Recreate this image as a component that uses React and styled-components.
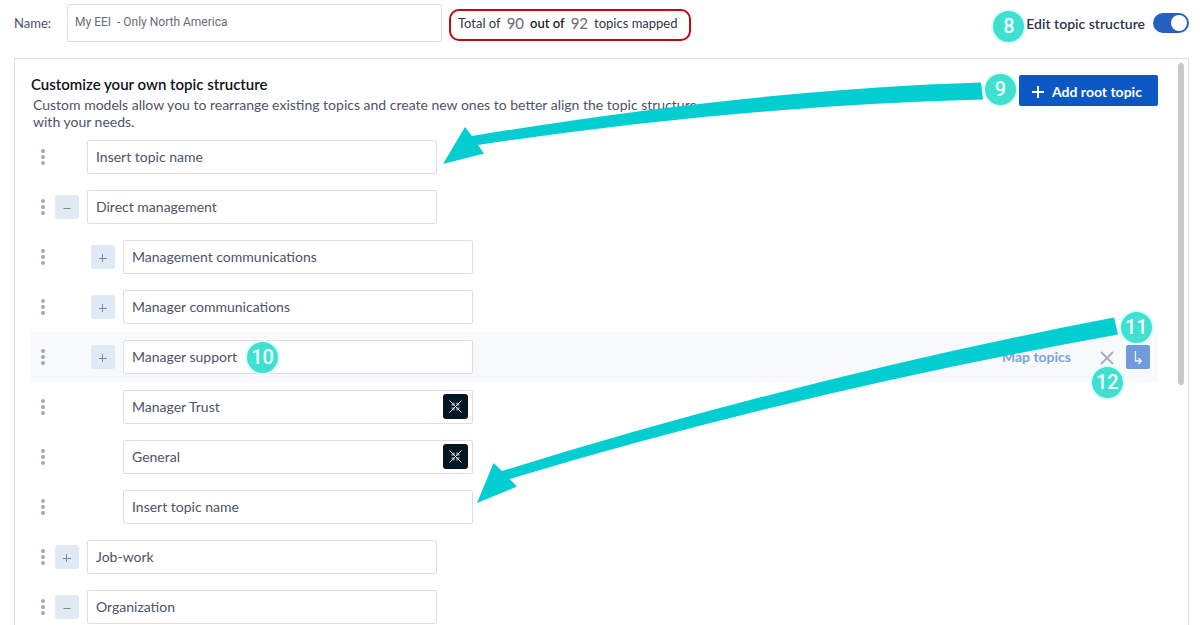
import React, {useState} from 'react';
import styled, {createGlobalStyle} from 'styled-components';

const GlobalStyle = createGlobalStyle`
    * {
        box-sizing: border-box;
    }
    body {
        margin: 0;
        background: #fff;
        color: #4c5467;
        font-family: Lato, 'Liberation Sans', sans-serif;
        font-size: 14px;
    }
    input, button {
        font-family: inherit;
        font-size: inherit;
    }
`

const Page = styled.div`
    position: relative;
    height: 100vh;
    padding: 4px 11px 0 14px;
    display: flex;
    flex-direction: column;
    overflow: hidden;
`

const TopBar = styled.header`
    display: flex;
    align-items: center;
    height: 38px;
    margin-bottom: 16px;
`

const NameLabel = styled.label`
    width: 53px;
    font-size: 13px;
`

const NameInput = styled.input`
    width: 375px;
    height: 38px;
    padding: 0 7px 3px;
    border: 1px solid #d9ddec;
    border-radius: 2px;
    color: #666b78;
    font-family: Roboto, sans-serif;
    font-size: 12px;
    white-space: pre;
`

const Total = styled.div`
    display: flex;
    align-items: center;
    height: 32px;
    width: 242px;
    margin: 4px 0 0 7px;
    padding: 0 7px 4px;
    border: 2px solid #bf0a0f;
    border-radius: 10px;
    color: #2f3646;
    font-size: 13px;
    white-space: pre;
`

const Count = styled.span`
    margin: 0 6px;
    color: #666b78;
    font-size: 15px;
`

const OutOf = styled.span`
    color: #1c2230;
    font-weight: 600;
`

const EditLabel = styled.label`
    position: relative;
    display: flex;
    align-items: center;
    gap: 8px;
    margin-left: auto;
    color: #2b344a;
    font-weight: 600;
`

const Switch = styled.input`
    appearance: none;
    width: 36px;
    height: 20px;
    margin: 0;
    border-radius: 10px;
    background: ${props => props.checked ? '#255fbf' : '#b9bfcc'};
    cursor: pointer;
    &::before {
        content: '';
        display: block;
        width: 16px;
        height: 16px;
        margin: 2px;
        margin-left: ${props => props.checked ? '18px' : '2px'};
        border-radius: 50%;
        background: #fff;
    }
`

const Badge = styled.span`
    position: absolute;
    z-index: 3;
    top: ${props => props.$top}px;
    left: ${props => props.$left}px;
    width: 35px;
    height: 35px;
    border: 2px solid #dcfdfb;
    border-radius: 50%;
    background: #40e0d0;
    color: #f2fffd;
    font-family: Roboto, sans-serif;
    font-size: 20px;
    font-weight: 500;
    line-height: 31px;
    text-align: center;
    pointer-events: none;
`

const Panel = styled.main`
    flex: 1;
    min-height: 0;
    display: flex;
    justify-content: space-between;
    border: 1px solid #d9ddec;
    border-bottom: none;
    overflow: hidden;
`

const Content = styled.div`
    flex: 1;
    padding: 16px 20px 0 16px;
`

const ScrollThumb = styled.div`
    width: 6px;
    height: 322px;
    margin: 4px 4px 0 0;
    border-radius: 3px;
    background: #c9c9c9;
`

const Intro = styled.div`
    display: flex;
    justify-content: space-between;
    align-items: flex-start;
    height: 57px;
`

const Title = styled.h1`
    margin: 0;
    color: #10131c;
    font-size: 15px;
    font-weight: 600;
    line-height: 19px;
`

const Description = styled.p`
    max-width: 670px;
    margin: 2px 0 0 2px;
    line-height: 17px;
`

const AddWrap = styled.div`
    position: relative;
`

const AddButton = styled.button`
    display: flex;
    align-items: center;
    gap: 8px;
    width: 139px;
    height: 31px;
    padding: 2px 0 0 13px;
    border: none;
    border-radius: 2px;
    background: #0b57c4;
    color: #fff;
    font-weight: 700;
    white-space: nowrap;
`

const TopicList = styled.ul`
    margin: 0;
    padding: 0;
    list-style: none;
`

const TopicRow = styled.li`
    display: flex;
    align-items: center;
    height: 50px;
    padding-right: 8px;
    background: ${props => props.$active ? '#f8f9fb' : 'transparent'};
`

const Handle = styled.button`
    display: flex;
    width: 24px;
    margin-right: ${props => props.$level * 36}px;
    padding: 0 0 0 10px;
    border: none;
    background: none;
`

const ToggleSlot = styled.div`
    width: 24px;
    height: 24px;
    margin-right: 8px;
`

const Toggle = styled.button`
    display: flex;
    align-items: center;
    justify-content: center;
    width: 24px;
    height: 24px;
    padding: 2px 0 0;
    border: none;
    border-radius: 3px;
    background: #e0eaf5;
`

const Field = styled.div`
    position: relative;
    width: 350px;
`

const TopicInput = styled.input`
    display: block;
    width: 100%;
    height: 34px;
    padding: 0 8px 2px;
    border: 1px solid #d9ddec;
    border-radius: 2px;
    background: #fff;
    color: #4c5467;
    &::placeholder {
        color: #4c5467;
        opacity: 1;
    }
`

const MergeButton = styled.button`
    position: absolute;
    top: 4px;
    right: 5px;
    display: flex;
    align-items: center;
    justify-content: center;
    width: 25px;
    height: 25px;
    padding: 0;
    border: none;
    border-radius: 3px;
    background: #051624;
`

const Actions = styled.div`
    position: relative;
    display: flex;
    align-items: center;
    margin-left: auto;
`

const MapLink = styled.a`
    margin-right: 29px;
    padding-bottom: 2px;
    color: #7aa2dd;
    font-weight: 700;
    text-decoration: none;
`

const RemoveButton = styled.button`
    display: flex;
    margin-right: 12px;
    padding: 2px 0 0;
    border: none;
    background: none;
`

const ChildButton = styled.button`
    display: flex;
    align-items: center;
    justify-content: center;
    width: 24px;
    height: 24px;
    padding: 2px 0 0;
    border: none;
    border-radius: 2px;
    background: #6f9bdb;
`

const Arrow = styled.svg`
    position: absolute;
    z-index: 2;
    top: ${props => props.$top}px;
    left: ${props => props.$left}px;
    width: calc(100% - ${props => props.$inset}px);
    height: ${props => props.$height}px;
    fill: #02ced1;
    pointer-events: none;
`

const topics = [
    {id: 1, name: '', level: 0},
    {id: 2, name: 'Direct management', level: 0, toggle: 'minus'},
    {id: 3, name: 'Management communications', level: 1, toggle: 'plus'},
    {id: 4, name: 'Manager communications', level: 1, toggle: 'plus'},
    {id: 5, name: 'Manager support', level: 1, toggle: 'plus', active: true},
    {id: 6, name: 'Manager Trust', level: 1, merge: true},
    {id: 7, name: 'General', level: 1, merge: true},
    {id: 8, name: '', level: 1},
    {id: 9, name: 'Job-work', level: 0, toggle: 'plus'},
    {id: 10, name: 'Organization', level: 0, toggle: 'minus'},
]

function DotsIcon () {
    return (
        <svg width="4" height="16" viewBox="0 0 4 16" fill="#a5a5c0">
            <circle cx="2" cy="2" r="2" />
            <circle cx="2" cy="8" r="2" />
            <circle cx="2" cy="14" r="2" />
        </svg>
    )
}

function ToggleIcon ({type}) {
    return (
        <svg width="8" height="8" viewBox="0 0 8 8" stroke="#7d88a8" fill="none">
            <path d={type === 'plus' ? 'M0 4.5H8M3.5 0V8' : 'M0.5 4.5H7.5'} />
        </svg>
    )
}

function MergeIcon () {
    return (
        <svg width="13" height="13" viewBox="0 0 13 13" stroke="#dfe3f2" fill="none">
            <path d="M0.5 0.5L12.5 12.5M12.5 0.5L0.5 12.5" />
            <path d="M2.5 4.9H4.9V2.5M10.5 4.9H8.1V2.5M2.5 8.1H4.9V10.5M10.5 8.1H8.1V10.5" strokeWidth="1.2" strokeOpacity="0.8" />
        </svg>
    )
}

function Topic ({topic}) {
    return (
        <TopicRow $active={topic.active}>
            <Handle $level={topic.level} aria-label="Move topic"><DotsIcon /></Handle>
            <ToggleSlot>
                {topic.toggle && <Toggle aria-label="Toggle subtopics"><ToggleIcon type={topic.toggle} /></Toggle>}
            </ToggleSlot>
            <Field>
                <TopicInput
                aria-label="Topic name"
                placeholder="Insert topic name"
                defaultValue={topic.name}
                />
                {topic.merge && <MergeButton aria-label="Merge topic"><MergeIcon /></MergeButton>}
                {topic.active && <Badge $top={0} $left={122}>10</Badge>}
            </Field>
            {topic.active &&
            <Actions>
                <MapLink href="#map">Map topics</MapLink>
                <RemoveButton aria-label="Remove topic">
                    <svg width="14" height="14" viewBox="0 0 14 14" stroke="#aaabc0" strokeWidth="1.8">
                        <path d="M1 1L13 13M13 1L1 13" />
                    </svg>
                </RemoveButton>
                <ChildButton aria-label="Add subtopic">
                    <svg width="8" height="14" viewBox="0 0 8 14" stroke="#f1f5fc" strokeWidth="1.3" fill="none">
                        <path d="M1.5 0V10H7M4.5 7L7.3 10L4.5 13" />
                    </svg>
                </ChildButton>
                <Badge $top={-35} $left={117}>11</Badge>
                <Badge $top={20} $left={88}>12</Badge>
            </Actions>}
        </TopicRow>
    )
}

export default function App() {

    const [editing, setEditing] = useState(true)

    return (
        <>
        <GlobalStyle />
        <Page>
            <TopBar>
                <NameLabel htmlFor="model-name">Name:</NameLabel>
                <NameInput id="model-name" defaultValue="My EEI  - Only North America" />
                <Total>
                    Total of<Count>90</Count><OutOf>out of</OutOf><Count>92</Count>topics mapped
                </Total>
                <EditLabel>
                    <Badge $top={-4} $left={-35}>8</Badge>
                    Edit topic structure
                    <Switch
                    type="checkbox"
                    checked={editing}
                    onChange={event => setEditing(event.target.checked)}
                    />
                </EditLabel>
            </TopBar>
            <Panel>
                <Content>
                    <Intro>
                        <div>
                            <Title>Customize your own topic structure</Title>
                            <Description>
                                Custom models allow you to rearrange existing topics and create new ones to better align the topic structure with your needs.
                            </Description>
                        </div>
                        <AddWrap>
                            <Badge $top={-3} $left={-36}>9</Badge>
                            <AddButton>
                                <svg width="12" height="12" viewBox="0 0 12 12" stroke="#fff" strokeWidth="2">
                                    <path d="M0 6H12M6 0V12" />
                                </svg>
                                Add root topic
                            </AddButton>
                        </AddWrap>
                    </Intro>
                    <TopicList>
                        {topics.map(topic => <Topic key={topic.id} topic={topic} />)}
                    </TopicList>
                </Content>
                <ScrollThumb />
            </Panel>
            <Arrow $top={82} $left={443} $inset={660} $height={82} viewBox="443 82 540 82" preserveAspectRatio="none">
                <path d="M443 164L465 127L472 136Q755 89.3 981 82.5L983 99.5Q741 105.6 478 145L484 153.5Z" />
            </Arrow>
            <Arrow $top={317} $left={477} $inset={559} $height={186} viewBox="477 317 641 186" preserveAspectRatio="none">
                <path d="M477 503L493.5 463L502 471Q812 375 1114 317.5L1118 334.5Q801 391.5 509.5 479L517 486.5Z" />
            </Arrow>
        </Page>
        </>
    );
}
